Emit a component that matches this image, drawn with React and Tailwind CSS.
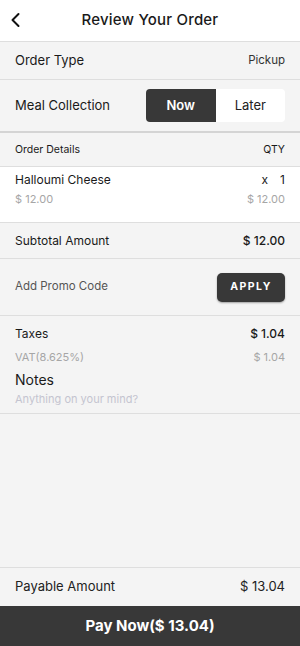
import React from 'react';

const Row = ({ className = '', children }) => (
  <div className={`flex items-center justify-between px-[15px] ${className}`}>{children}</div>
);

export default function App() {
  return (
    <div
      className="flex h-[646px] w-[300px] flex-col bg-[#f4f4f4] text-[#1a1a1a]"
      style={{ fontFamily: 'Inter, "Liberation Sans", sans-serif' }}
    >
      {/* header */}
      <div className="relative flex h-[42px] shrink-0 items-center justify-center border-b border-[#dedede] bg-white">
        <svg
          className="absolute left-[9px] top-[12px]"
          width="14"
          height="16"
          viewBox="0 0 14 16"
          fill="none"
          stroke="#111"
          strokeWidth="2"
          strokeLinecap="round"
          strokeLinejoin="round"
        >
          <path d="M9.5 2 L3.5 8 L9.5 14" />
        </svg>
        <span className="text-[15px] font-medium tracking-[0.2px]">Review Your Order</span>
      </div>

      <Row className="h-[38px] shrink-0 border-b border-[#dedede]">
        <span className="text-[13px]">Order Type</span>
        <span className="text-[11.5px] text-[#333]">Pickup</span>
      </Row>

      <Row className="h-[53px] shrink-0 border-b-2 border-[#d4d4d4]">
        <span className="text-[13px]">Meal Collection</span>
        <div className="flex h-[33px] w-[139px] overflow-hidden rounded-[4px] bg-white">
          <div className="flex flex-1 items-center justify-center bg-[#383838] text-[13px] font-semibold text-white">
            Now
          </div>
          <div className="flex flex-1 items-center justify-center text-[13px] text-[#222]">Later</div>
        </div>
      </Row>

      <Row className="h-[34px] shrink-0 border-b border-[#dedede]">
        <span className="text-[10.5px]">Order Details</span>
        <span className="text-[10.5px]">QTY</span>
      </Row>

      <div className="flex h-[56px] shrink-0 flex-col border-b border-[#dedede] bg-white px-[15px] pt-[4px]">
        <div className="flex items-center justify-between">
          <span className="text-[12px]">Halloumi Cheese</span>
          <span className="flex gap-[12px] text-[12px]">
            <span>x</span>
            <span>1</span>
          </span>
        </div>
        <div className="mt-[2px] flex items-center justify-between text-[11px] text-[#a6a6a6]">
          <span>$ 12.00</span>
          <span>$ 12.00</span>
        </div>
      </div>

      <Row className="h-[36px] shrink-0 border-b border-[#dedede]">
        <span className="text-[12px]">Subtotal Amount</span>
        <span className="text-[12px] font-medium">$ 12.00</span>
      </Row>

      <Row className="h-[57px] shrink-0 border-b border-[#dedede]">
        <span className="text-[11.5px] text-[#555]">Add Promo Code</span>
        <button className="flex h-[29px] w-[68px] items-center justify-center rounded-[5px] bg-[#383838] text-[10.5px] font-bold tracking-[1.5px] text-white shadow-[0_1px_2px_rgba(0,0,0,0.35)]">
          APPLY
        </button>
      </Row>

      <div className="flex h-[98px] shrink-0 flex-col border-b border-[#dedede] px-[15px] pt-[9px]">
        <div className="flex items-center justify-between text-[12px]">
          <span>Taxes</span>
          <span className="font-medium">$ 1.04</span>
        </div>
        <div className="mt-[6px] flex items-center justify-between text-[11px] text-[#a6a6a6]">
          <span>VAT(8.625%)</span>
          <span>$ 1.04</span>
        </div>
        <div className="mt-[3px] text-[14px]">Notes</div>
        <div className="mt-[1px] text-[11px] text-[#c4c4d0]">Anything on your mind?</div>
      </div>

      <div className="flex-1" />

      <Row className="h-[39px] shrink-0 border-t border-[#dedede]">
        <span className="text-[13px] text-[#222]">Payable Amount</span>
        <span className="text-[13px] text-[#222]">$ 13.04</span>
      </Row>

      <div className="flex h-[40px] shrink-0 items-center justify-center bg-[#383838] text-[15px] font-bold text-white">
        Pay Now($ 13.04)
      </div>
    </div>
  );
}
